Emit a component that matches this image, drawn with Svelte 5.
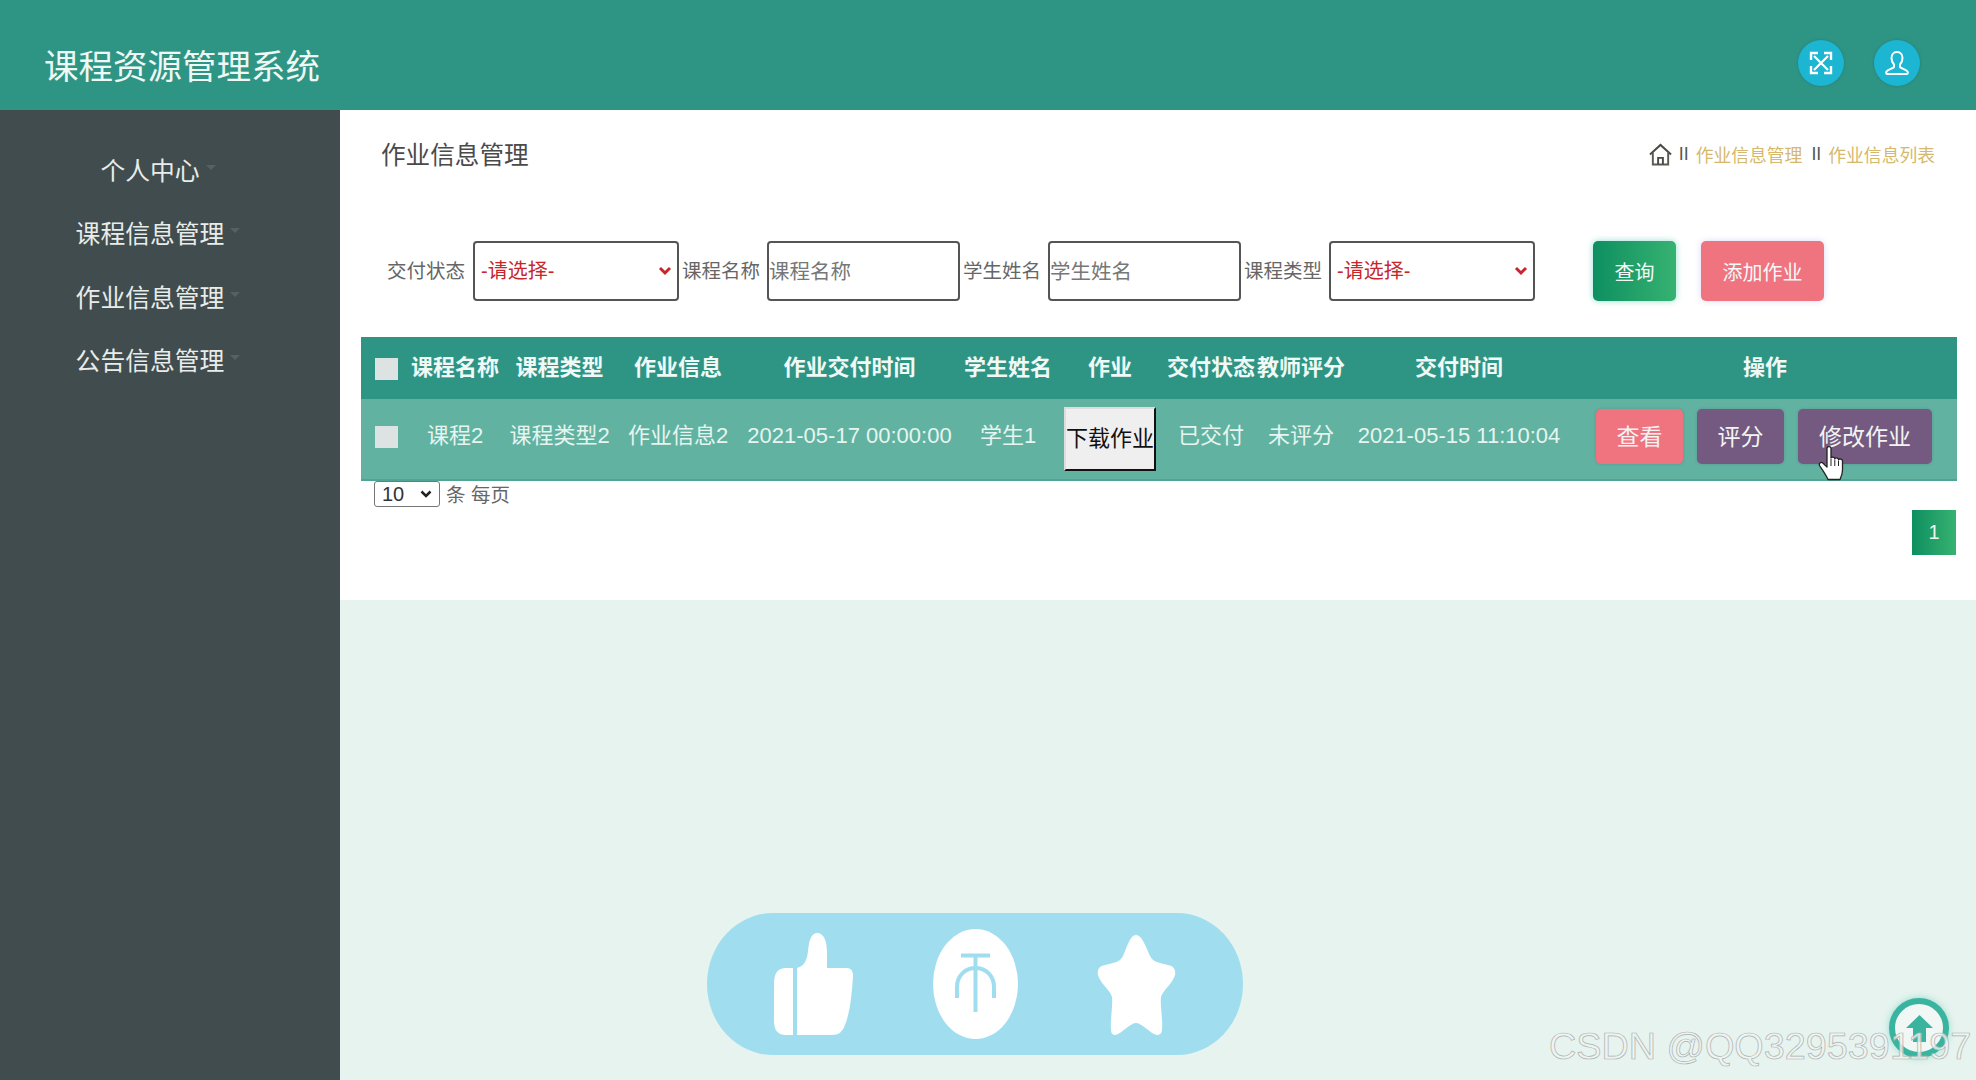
<script>
  const menu = ['个人中心', '课程信息管理', '作业信息管理', '公告信息管理'];

  const columns = [
    { label: '课程名称', width: 92 },
    { label: '课程类型', width: 117 },
    { label: '作业信息', width: 120 },
    { label: '作业交付时间', width: 223 },
    { label: '学生姓名', width: 94 },
    { label: '作业', width: 110 },
    { label: '交付状态', width: 92 },
    { label: '教师评分', width: 88 },
    { label: '交付时间', width: 228 },
    { label: '操作', width: 384 }
  ];
</script>

<div class="page">
  <header class="topbar">
    <h1>课程资源管理系统</h1>
    <div class="top-icons">
      <button class="round" aria-label="全屏">
        <svg width="24" height="24" viewBox="0 0 24 24" fill="none" stroke="#fff" stroke-width="2.2">
          <path d="M5 5l14 14M19 5L5 19" />
          <path d="M2 9V2h7M15 2h7v7M22 15v7h-7M9 22H2v-7" stroke-width="2.4" />
        </svg>
      </button>
      <button class="round" aria-label="用户">
        <svg width="26" height="26" viewBox="0 0 26 26" fill="none" stroke="#fff" stroke-width="2">
          <path d="M13 2c-3.600 0-5.500 2.800-5.500 6 0 2.800 1 5 2.500 6.500v2.500c-1.500 1.500-6 2.500-7.500 4.500-.6.9-.4 2.500.5 2.500h20c.9 0 1.100-1.600.5-2.500-1.500-2-6-3-7.500-4.500v-2.500c1.500-1.500 2.500-3.700 2.500-6.500 0-3.200-1.900-6-5.500-6z" />
        </svg>
      </button>
    </div>
  </header>

  <div class="body">
    <nav class="sidebar">
      {#each menu as item}
        <a class="menu-item" href="#top"><span class="menu-text">{item}<i class="caret"></i></span></a>
      {/each}
    </nav>

    <main class="main">
      <section class="panel">
        <div class="title-row">
          <h2>作业信息管理</h2>
          <div class="crumbs">
            <svg class="home" width="23" height="23" viewBox="0 0 24 23" fill="none" stroke="#4a4a48" stroke-width="2">
              <path d="M1 11.500L12 1.500l11 10" />
              <path d="M4 9.500V22h16V9.500" stroke="#5c5a50" />
              <path d="M9.500 22v-7h5v7" />
            </svg>
            <span class="sep">II</span>
            <span>作业信息管理</span>
            <span class="sep">II</span>
            <span>作业信息列表</span>
          </div>
        </div>

        <div class="filters">
          <label for="f-status">交付状态</label>
          <select id="f-status" class="picker"><option>-请选择-</option></select>
          <label for="f-course" class="next">课程名称</label>
          <input id="f-course" class="text-input" placeholder="课程名称" />
          <label for="f-student" class="next">学生姓名</label>
          <input id="f-student" class="text-input" placeholder="学生姓名" />
          <label for="f-type" class="next">课程类型</label>
          <select id="f-type" class="picker"><option>-请选择-</option></select>
          <button class="btn-search">查询</button>
          <button class="btn-add">添加作业</button>
        </div>

        <table>
          <colgroup>
            <col style="width: 48px" />
            {#each columns as col}
              <col style="width: {col.width}px" />
            {/each}
          </colgroup>
          <thead>
            <tr>
              <th class="check-cell"><input type="checkbox" aria-label="全选" /></th>
              {#each columns as col}
                <th>{col.label}</th>
              {/each}
            </tr>
          </thead>
          <tbody>
            <tr>
              <td class="check-cell"><input type="checkbox" aria-label="选择" /></td>
              <td>课程2</td>
              <td>课程类型2</td>
              <td>作业信息2</td>
              <td>2021-05-17 00:00:00</td>
              <td>学生1</td>
              <td class="plain"><button class="btn-download">下载作业</button></td>
              <td>已交付</td>
              <td>未评分</td>
              <td>2021-05-15 11:10:04</td>
              <td class="plain">
                <div class="actions">
                  <button class="act pink">查看</button>
                  <button class="act purple">评分</button>
                  <button class="act purple wide">修改作业</button>
                </div>
              </td>
            </tr>
          </tbody>
        </table>

        <div class="page-size">
          <select><option>10</option></select>
          <span>条 每页</span>
        </div>
        <div class="pager"><a href="#top">1</a></div>
      </section>
    </main>
  </div>

  <!-- video overlay on top of the page -->
  <svg class="cursor" width="27" height="35" viewBox="0 0 27 35">
    <path d="M9 2.500c0-2.500 4-2.500 4 0V12c1-1.500 3.500-1 3.800.5 1-1.200 3.400-.8 3.700 1 1.200-1 4-.3 4 1.500v9c0 4-1 6-2.500 9.500H10C8 29 4.500 24 1.800 20c-1.500-2.500 1-4.500 3-3l4.200 4z" fill="#fff" stroke="#222" stroke-width="1.300" stroke-linejoin="round" />
    <path d="M13 13v7M16.800 13.500v6.500M20.500 14.500v5.500" stroke="#222" stroke-width="1" fill="none" />
  </svg>

  <div class="pill">
    <svg width="79" height="102" viewBox="0 0 79 102" fill="#fff">
      <path d="M19 35H12Q0 35 0 50V88Q0 102 12 102H19Z" />
      <path d="M23 35C30 33 33 28 34 18C35 6 38 0 43 0C50 0 53 8 53 20V35H73Q79 35 79 43C78 60 76 80 71 92Q68 102 58 102H23Z" />
    </svg>
    <svg width="85" height="110" viewBox="0 0 85 110">
      <ellipse cx="42.500" cy="55" rx="42.500" ry="55" fill="#fff" />
      <path d="M28 26.500H57M42.500 26V83M24 69V58C24 47 32 39 42.500 39S61 47 61 58V69" fill="none" stroke="#a0deef" stroke-width="4" />
    </svg>
    <svg width="79" height="101" viewBox="0 0 79 101" fill="#fff">
      <path d="M39 0C45 0 49 12 53 21C56 27 62 28 71 30C77 31 79 35 78 40C76 48 66 55 64 62C63 72 66 85 65 94C65 100 61 101 57 99C50 95 44 88 39 88C34 88 28 95 21 99C17 101 14 100 14 94C13 85 16 72 15 62C13 55 3 48 1 40C0 35 2 31 8 30C17 28 23 27 26 21C30 12 33 0 39 0Z" />
    </svg>
  </div>

  <button class="to-top" aria-label="回到顶部">
    <svg width="27" height="27" viewBox="0 0 27 27" fill="#3ab49e">
      <path d="M13.500 0L27 13H20V27H7V13H0Z" />
    </svg>
  </button>

  <div class="watermark">CSDN @QQ3295391197</div>
</div>

<style>
  :global(body) {
    margin: 0;
    background: #e6f3ee;
    font-family: "Liberation Sans", "Noto Sans CJK SC", sans-serif;
  }

  .page {
    position: relative;
    width: 1976px;
    height: 1080px;
    overflow: hidden;
    display: flex;
    flex-direction: column;
  }

  .topbar {
    height: 110px;
    flex: none;
    background: #2e9585;
    display: flex;
    align-items: center;
    justify-content: space-between;
    padding: 0 56px 0 44px;
    box-sizing: border-box;
  }

  .topbar h1 {
    margin: 18px 0 0;
    font-size: 34.5px;
    font-weight: normal;
    color: #eef8f5;
  }

  .top-icons {
    display: flex;
    gap: 30px;
    margin-top: 16px;
  }

  .round {
    width: 46px;
    height: 46px;
    border: none;
    border-radius: 50%;
    background: #1cb5d2;
    box-shadow: 0 0 3px rgba(30, 100, 110, 0.5);
    display: flex;
    align-items: center;
    justify-content: center;
    padding: 0;
  }

  .body {
    flex: 1;
    display: flex;
    min-height: 0;
  }

  .sidebar {
    width: 340px;
    flex: none;
    background: #404c4e;
    padding: 27px 40px 0 0;
    box-sizing: border-box;
  }

  .menu-item {
    height: 63.5px;
    display: flex;
    align-items: center;
    justify-content: center;
    color: #e8ecea;
    font-size: 24.8px;
    text-decoration: none;
  }

  .menu-text {
    position: relative;
  }

  .caret {
    position: absolute;
    left: 100%;
    top: 14px;
    margin-left: 6px;
    border: 5px solid transparent;
    border-top-color: #566163;
  }

  .main {
    flex: 1;
    min-width: 0;
    background: #e6f3ee;
  }

  .panel {
    height: 490px;
    background: #fff;
    padding: 30px 19px 0 21px;
    box-sizing: border-box;
  }

  .title-row {
    height: 34px;
    display: flex;
    align-items: center;
    justify-content: space-between;
  }

  .title-row h2 {
    margin: 0 0 8px 20px;
    font-size: 24.6px;
    font-weight: normal;
    color: #4a4a4a;
  }

  .crumbs {
    display: flex;
    align-items: center;
    gap: 9px;
    margin: -6px 22px 0 0;
    font-size: 17.8px;
    color: #d6b86c;
  }

  .home {
    margin-right: -2px;
  }

  .sep {
    color: #555;
    margin-right: -2px;
  }

  .filters {
    margin-top: 67px;
    height: 60px;
    padding-left: 26px;
    display: flex;
    align-items: center;
  }

  .filters label {
    font-size: 19.5px;
    color: #666;
    margin: -4px 8px 0 0;
    white-space: nowrap;
  }

  .filters label.next {
    margin: -4px 7px 0 3px;
  }

  .picker {
    appearance: none;
    width: 206px;
    height: 60px;
    border: 2px solid #555;
    border-radius: 4px;
    background: #fff url("data:image/svg+xml,%3Csvg xmlns='http://www.w3.org/2000/svg' width='14' height='10'%3E%3Cpath d='M2 2l5 5 5-5' fill='none' stroke='%23c9252c' stroke-width='3'/%3E%3C/svg%3E") no-repeat right 5px center;
    color: #c9252c;
    font: inherit;
    font-size: 20px;
    padding: 0 0 0 6px;
  }

  .text-input {
    width: 193px;
    height: 60px;
    box-sizing: border-box;
    border: 2px solid #555;
    border-radius: 4px;
    font: inherit;
    font-size: 20.5px;
    padding: 2px 0 0;
  }

  .text-input::placeholder {
    color: #777;
  }

  .btn-search,
  .btn-add {
    height: 60px;
    border: none;
    border-radius: 5px;
    color: #f4faf7;
    font: inherit;
    font-size: 20px;
    padding: 0;
  }

  .btn-search {
    width: 83px;
    margin-left: 58px;
    background: linear-gradient(90deg, #0e8f60, #36b271);
    box-shadow: 0 0 6px rgba(40, 190, 170, 0.5);
  }

  .btn-add {
    width: 123px;
    margin-left: 25px;
    background: #ef7480;
    box-shadow: 0 0 6px rgba(150, 150, 230, 0.35);
  }

  table {
    width: 1596px;
    margin-top: 36px;
    border-collapse: collapse;
    table-layout: fixed;
    font-size: 22px;
    line-height: 30px;
    color: #e6f5ef;
  }

  th,
  td {
    padding: 0;
    text-align: center;
    white-space: nowrap;
  }

  thead tr {
    height: 62px;
    background: #2e9585;
  }

  th {
    font-size: 22px;
    font-weight: bold;
    color: #f0f9f6;
    padding-bottom: 1px;
  }

  tbody tr {
    height: 81px;
    background: #62b2a2;
    border-bottom: 2px solid #4fa493;
  }

  td {
    padding-bottom: 6px;
  }

  td.plain {
    padding-bottom: 0;
  }

  .check-cell {
    text-align: left;
    padding-left: 14px;
  }

  th.check-cell {
    padding: 1px 0 0 14px;
  }

  td.check-cell {
    padding-bottom: 5px;
  }

  .check-cell input {
    appearance: none;
    display: block;
    width: 23px;
    height: 22px;
    margin: 0;
    background: #dde3e3;
  }

  .btn-download {
    width: 92px;
    height: 64px;
    padding: 0;
    background: #efefef;
    border: 2px solid;
    border-color: #ddd #111 #111 #ddd;
    color: #111;
    font: inherit;
    font-size: 22px;
    white-space: nowrap;
    overflow: hidden;
  }

  .actions {
    display: flex;
    justify-content: center;
    gap: 14px;
    padding: 0 2px 5px 0;
  }

  .act {
    width: 87px;
    height: 55px;
    border: none;
    border-radius: 5px;
    color: #f2f4f2;
    font: inherit;
    font-size: 23px;
    padding: 0;
    box-shadow: 0 0 3px rgba(60, 60, 90, 0.25);
  }

  .act.pink {
    background: #ef7480;
  }

  .act.purple {
    background: #745a80;
  }

  .act.wide {
    width: 134px;
  }

  .page-size {
    display: flex;
    align-items: center;
    gap: 6px;
    margin: -2px 0 0 13px;
    font-size: 19.5px;
    color: #666;
  }

  .page-size select {
    appearance: none;
    width: 66px;
    height: 26px;
    font: inherit;
    font-size: 20px;
    background: #fff url("data:image/svg+xml,%3Csvg xmlns='http://www.w3.org/2000/svg' width='12' height='8'%3E%3Cpath d='M1.500 1.500l4.500 4.500 4.500-4.500' fill='none' stroke='%23222' stroke-width='2.500'/%3E%3C/svg%3E") no-repeat right 7px center;
    color: #333;
    border: 1px solid #767676;
    border-radius: 3px;
    padding: 0 0 0 7px;
  }

  .pager {
    display: flex;
    justify-content: flex-end;
    margin: 2px 1px 0 0;
  }

  .pager a {
    width: 44px;
    height: 45px;
    display: flex;
    align-items: center;
    justify-content: center;
    background: linear-gradient(90deg, #0e8f60, #36b271);
    color: #eef8f3;
    font-size: 20px;
    text-decoration: none;
  }

  .cursor {
    position: absolute;
    left: 1818px;
    top: 446px;
  }

  .pill {
    position: absolute;
    left: 707px;
    top: 913px;
    width: 536px;
    height: 142px;
    border-radius: 66px / 71px;
    background: #a0deef;
  }

  .pill svg {
    position: absolute;
  }

  .pill svg:nth-child(1) {
    left: 67px;
    top: 20px;
  }

  .pill svg:nth-child(2) {
    left: 226px;
    top: 16px;
  }

  .pill svg:nth-child(3) {
    left: 390px;
    top: 22px;
  }

  .to-top {
    position: absolute;
    left: 1889px;
    top: 998px;
    width: 60px;
    height: 60px;
    box-sizing: border-box;
    border: 6px solid #3ab49e;
    border-radius: 50%;
    background: #f0f7f5;
    box-shadow: 0 0 6px rgba(54, 200, 180, 0.5);
    display: flex;
    align-items: center;
    justify-content: center;
    padding: 0;
  }

  .watermark {
    position: absolute;
    left: 1549px;
    top: 1025px;
    font-family: "Liberation Sans", sans-serif;
    font-size: 37.8px;
    white-space: nowrap;
    color: rgba(240, 245, 243, 0.8);
    -webkit-text-stroke: 0.7px #adb1af;
  }
</style>
